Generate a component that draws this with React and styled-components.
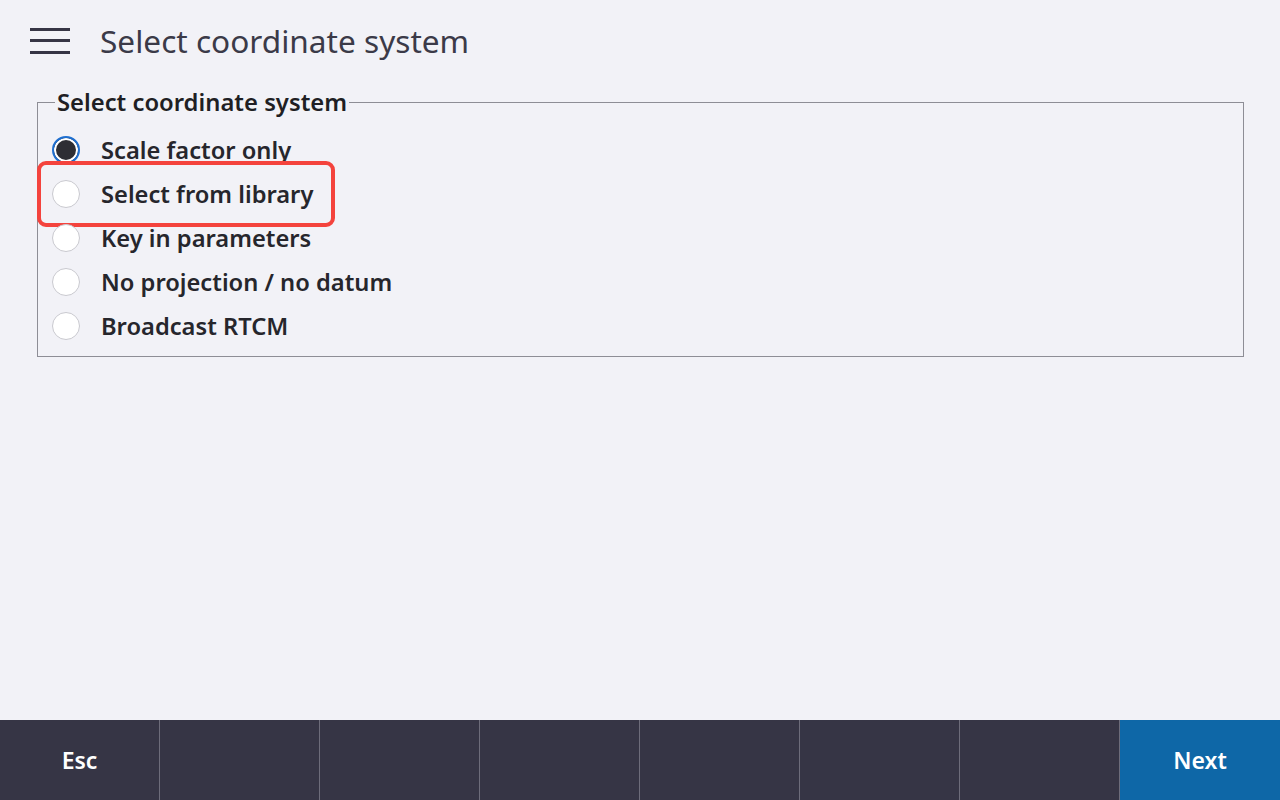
import React from "react";
import styled, { createGlobalStyle } from "styled-components";

const GlobalStyle = createGlobalStyle`
  html, body {
    margin: 0;
    padding: 0;
    background: #f2f2f7;
  }
  body {
    font-family: "Noto Sans", "Open Sans", sans-serif;
  }
`;

const Screen = styled.div`
  width: 1280px;
  height: 800px;
  display: flex;
  flex-direction: column;
  background: #f2f2f7;
`;

const Header = styled.header`
  height: 82px;
  display: flex;
  align-items: center;
  padding-left: 30px;
  box-sizing: border-box;
`;

const MenuButton = styled.div`
  width: 40px;
  height: 26px;
  display: flex;
  flex-direction: column;
  justify-content: space-between;
  margin-right: 30px;
  margin-top: -1px;
`;

const MenuLine = styled.span`
  display: block;
  height: 3px;
  background: #363545;
`;

const Title = styled.h1`
  margin: 0;
  font-size: 31.6px;
  font-weight: 400;
  color: #3b3a48;
  margin-top: -1px;
`;

const Content = styled.main`
  flex: 1;
  padding: 7px 36px 0 37px;
`;

const Group = styled.fieldset`
  margin: 0;
  border: 1px solid #8e8e96;
  padding: 0 0 10px 14px;
  height: 268px;
  box-sizing: border-box;
`;

const Legend = styled.legend`
  font-size: 23.8px;
  font-weight: 600;
  color: #1f1f24;
  padding: 0 2px;
  margin-left: 3px;
  line-height: 26px;
`;

const Options = styled.div`
  display: flex;
  flex-direction: column;
  margin-top: 13px;
`;

const Option = styled.label`
  position: relative;
  display: flex;
  align-items: center;
  height: 44px;
  font-size: 23.7px;
  font-weight: 600;
  color: #26262c;
`;

const Radio = styled.span`
  width: 28px;
  height: 28px;
  border-radius: 50%;
  box-sizing: border-box;
  margin-right: 21px;
  flex-shrink: 0;
  background: ${p => (p.checked ? "#2e2e34" : "#ffffff")};
  border: ${p => (p.checked ? "2px solid #1f6fd0" : "1px solid #c9c9cf")};
  box-shadow: ${p => (p.checked ? "inset 0 0 0 2px #ffffff" : "none")};
`;

const Highlight = styled.span`
  position: absolute;
  left: -15px;
  top: -11px;
  width: 298px;
  height: 66px;
  border: 4px solid #f4433d;
  border-radius: 9px;
  box-sizing: border-box;
  pointer-events: none;
`;

const Footer = styled.footer`
  height: 80px;
  display: grid;
  grid-template-columns: repeat(8, 160px);
  background: #363545;
`;

const SoftKey = styled.div`
  display: flex;
  align-items: center;
  justify-content: center;
  font-size: 23px;
  font-weight: 600;
  color: #ffffff;
  background: ${p => (p.primary ? "#0e67a7" : "#363545")};
  border-right: ${p => (p.last ? "none" : "1px solid #6d6c7a")};
`;

const options = [
  { label: "Scale factor only", checked: true },
  { label: "Select from library", highlight: true },
  { label: "Key in parameters" },
  { label: "No projection / no datum" },
  { label: "Broadcast RTCM" },
];

const keys = ["Esc", "", "", "", "", "", "", "Next"];

export default function App() {
  return (
    <Screen>
      <GlobalStyle />
      <Header>
        <MenuButton>
          <MenuLine />
          <MenuLine />
          <MenuLine />
        </MenuButton>
        <Title>Select coordinate system</Title>
      </Header>
      <Content>
        <Group>
          <Legend>Select coordinate system</Legend>
          <Options>
            {options.map(o => (
              <Option key={o.label}>
                <Radio checked={o.checked} />
                {o.label}
                {o.highlight && <Highlight />}
              </Option>
            ))}
          </Options>
        </Group>
      </Content>
      <Footer>
        {keys.map((k, i) => (
          <SoftKey key={i} last={i === keys.length - 1} primary={k === "Next"}>
            {k}
          </SoftKey>
        ))}
      </Footer>
    </Screen>
  );
}
